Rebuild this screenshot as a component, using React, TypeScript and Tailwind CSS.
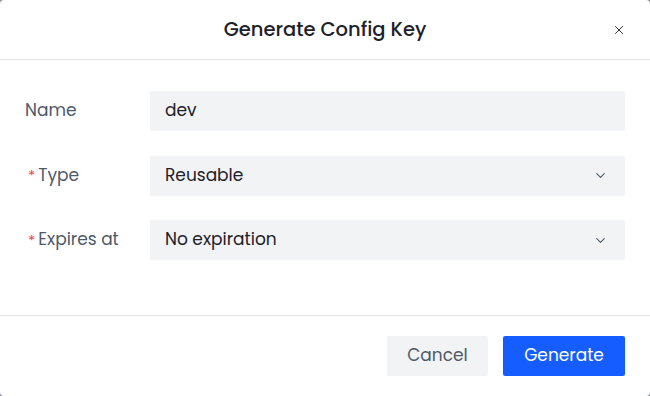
import { X, ChevronDown } from 'lucide-react';

const FONT = { fontFamily: 'Poppins, Inter, "Noto Sans", sans-serif' };

function Label({ text, required }: { text: string; required?: boolean }) {
  return (
    <div className="w-[125px] shrink-0 text-[17px] text-[#4e5969] flex items-center">
      {required && <span className="text-[#f53f3f] mr-[3px] ml-[3px] text-[15px] leading-none">*</span>}
      {text}
    </div>
  );
}

function Field({ value, select }: { value: string; select?: boolean }) {
  return (
    <div className="flex-1 h-[40px] rounded-[2px] bg-[#f2f3f5] flex items-center justify-between pl-[15px] pr-[17px] text-[17px] text-[#1d2129]">
      <span>{value}</span>
      {select && <ChevronDown size={15} strokeWidth={1.8} className="text-[#4e5969]" />}
    </div>
  );
}

export default function App() {
  return (
    <div className="w-[650px] h-[396px] bg-[#8a8d93]" style={FONT}>
      <div className="w-full h-full bg-white rounded-[4px] flex flex-col">
        <div className="h-[60px] shrink-0 border-b border-[#e5e6eb] flex items-center justify-center relative">
          <h2 className="text-[19.5px] font-[450] text-[#1d2129]">Generate Config Key</h2>
          <button className="absolute right-[24px] top-[23px] text-[#1d2129]">
            <X size={14} strokeWidth={1.6} />
          </button>
        </div>
        <div className="px-[25px] pt-[31px] pb-[55px] flex flex-col gap-[24.5px] border-b border-[#e5e6eb]">
          <div className="flex items-center">
            <Label text="Name" />
            <Field value="dev" />
          </div>
          <div className="flex items-center">
            <Label text="Type" required />
            <Field value="Reusable" select />
          </div>
          <div className="flex items-center">
            <Label text="Expires at" required />
            <Field value="No expiration" select />
          </div>
        </div>
        <div className="flex-1 flex items-center justify-end gap-[15px] px-[25px]">
          <button className="h-[40px] w-[101px] rounded-[2px] bg-[#f2f3f5] text-[17px] text-[#4e5969]">Cancel</button>
          <button className="h-[40px] w-[122px] rounded-[2px] bg-[#165dff] text-[17px] text-white">Generate</button>
        </div>
      </div>
    </div>
  );
}
